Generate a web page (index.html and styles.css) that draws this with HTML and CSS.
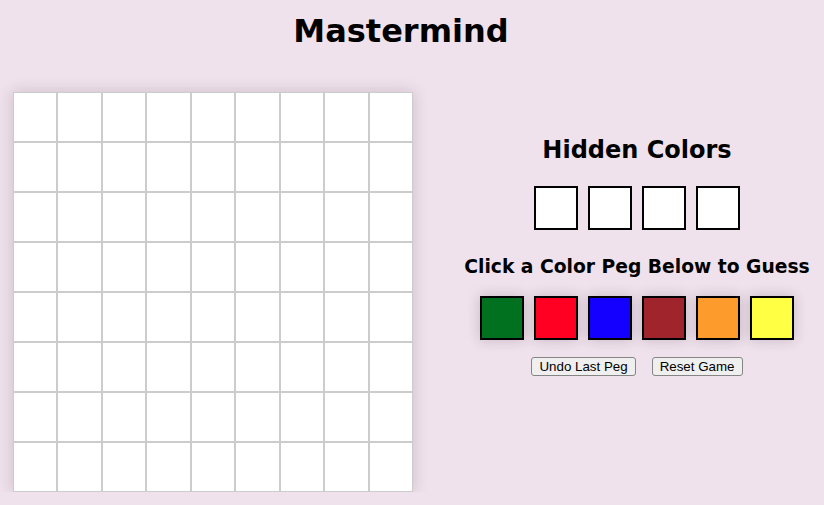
FILE: index.html
```html
<!DOCTYPE html>
<html>
<head>
<meta charset="utf-8">
<title>Mastermind</title>
<link rel="stylesheet" href="styles.css">
</head>
<body>
<header class="header"><h1 class="title">Mastermind</h1></header>
<main class="main">
  <div class="board">
    <div class="cell"></div><div class="cell"></div><div class="cell"></div><div class="cell"></div><div class="cell"></div><div class="cell"></div><div class="cell"></div><div class="cell"></div><div class="cell"></div>
    <div class="cell"></div><div class="cell"></div><div class="cell"></div><div class="cell"></div><div class="cell"></div><div class="cell"></div><div class="cell"></div><div class="cell"></div><div class="cell"></div>
    <div class="cell"></div><div class="cell"></div><div class="cell"></div><div class="cell"></div><div class="cell"></div><div class="cell"></div><div class="cell"></div><div class="cell"></div><div class="cell"></div>
    <div class="cell"></div><div class="cell"></div><div class="cell"></div><div class="cell"></div><div class="cell"></div><div class="cell"></div><div class="cell"></div><div class="cell"></div><div class="cell"></div>
    <div class="cell"></div><div class="cell"></div><div class="cell"></div><div class="cell"></div><div class="cell"></div><div class="cell"></div><div class="cell"></div><div class="cell"></div><div class="cell"></div>
    <div class="cell"></div><div class="cell"></div><div class="cell"></div><div class="cell"></div><div class="cell"></div><div class="cell"></div><div class="cell"></div><div class="cell"></div><div class="cell"></div>
    <div class="cell"></div><div class="cell"></div><div class="cell"></div><div class="cell"></div><div class="cell"></div><div class="cell"></div><div class="cell"></div><div class="cell"></div><div class="cell"></div>
    <div class="cell"></div><div class="cell"></div><div class="cell"></div><div class="cell"></div><div class="cell"></div><div class="cell"></div><div class="cell"></div><div class="cell"></div><div class="cell"></div>
  </div>
  <section class="panel">
    <h2 class="panel-title">Hidden Colors</h2>
    <div class="hidden-row">
      <div class="hidden-box"></div>
      <div class="hidden-box"></div>
      <div class="hidden-box"></div>
      <div class="hidden-box"></div>
    </div>
    <h3 class="panel-sub">Click a Color Peg Below to Guess</h3>
    <div class="peg-row">
      <div class="peg peg-green"></div>
      <div class="peg peg-red"></div>
      <div class="peg peg-blue"></div>
      <div class="peg peg-brown"></div>
      <div class="peg peg-orange"></div>
      <div class="peg peg-yellow"></div>
    </div>
    <div class="button-row">
      <button class="btn" type="button">Undo Last Peg</button>
      <button class="btn" type="button">Reset Game</button>
    </div>
  </section>
</main>
</body>
</html>
```
FILE: styles.css
```css
html, body {
  margin: 0;
  padding: 0;
  background: #efe2ec;
}
body {
  font-family: "DejaVu Sans", Verdana, sans-serif;
  color: #000;
  overflow: hidden;
}
.header {
  width: 802px;
  text-align: center;
}
.title {
  margin: 13px 0 0;
  font-size: 32px;
  line-height: 37px;
  font-weight: bold;
}
.main {
  display: flex;
  align-items: flex-start;
  padding-left: 13px;
  margin-top: 42px;
}
.board {
  width: 400px;
  height: 400px;
  flex: none;
  display: grid;
  grid-template-columns: repeat(9, 1fr);
  grid-template-rows: repeat(8, 1fr);
  background: #fff;
  box-shadow: 0 0 14px rgba(80, 50, 70, 0.22);
}
.cell {
  box-sizing: border-box;
  border: 1px solid #cccccc;
  background: #fff;
}
.panel {
  flex: 1;
  margin-left: 37px;
  padding-top: 44px;
  display: flex;
  flex-direction: column;
  align-items: center;
}
.panel-title {
  margin: 0;
  font-size: 24px;
  line-height: 28px;
  font-weight: bold;
}
.hidden-row {
  display: flex;
  gap: 10px;
  margin-top: 22px;
}
.hidden-box {
  width: 40px;
  height: 40px;
  border: 2px solid #000;
  background: #fff;
}
.panel-sub {
  margin: 26px 0 0;
  font-size: 18.72px;
  line-height: 22px;
  font-weight: bold;
  white-space: nowrap;
}
.peg-row {
  display: flex;
  gap: 10px;
  margin-top: 18px;
}
.peg {
  width: 40px;
  height: 40px;
  border: 2px solid #000;
  box-shadow: 0 0 12px rgba(60, 30, 50, 0.22);
}
.peg-green { background: #02711f; }
.peg-red { background: #ff0022; }
.peg-blue { background: #1400ff; }
.peg-brown { background: #a0242b; }
.peg-orange { background: #fe9b2d; }
.peg-yellow { background: #ffff44; }
.button-row {
  display: flex;
  gap: 16px;
  margin-top: 17px;
}
.btn {
  font-family: "Liberation Sans", Arial, sans-serif;
  font-size: 13.333px;
  line-height: 15px;
  padding: 1px 7px;
  border: 1px solid #858585;
  border-radius: 3px;
  background: #efefef;
  color: #000;
}
```
